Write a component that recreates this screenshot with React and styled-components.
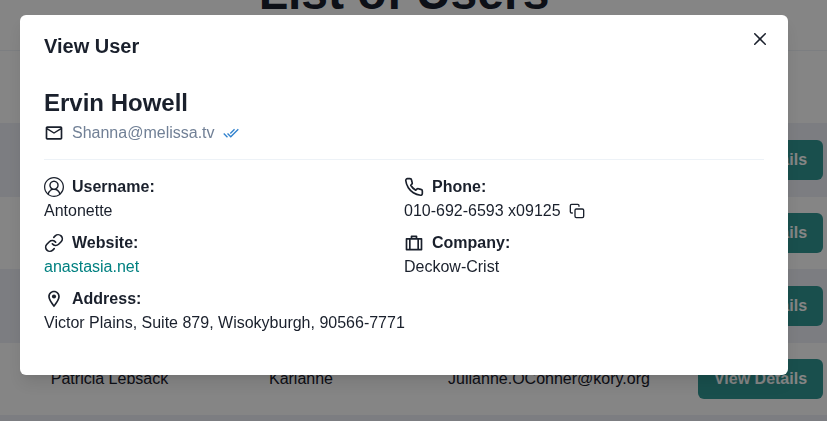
import React from "react";
import styled, { createGlobalStyle } from "styled-components";
import { RiSuitcaseLine } from "react-icons/ri";
import { VscAccount } from "react-icons/vsc";
import { FiLink, FiPhone, FiCopy } from "react-icons/fi";
import { MdDoneAll, MdMailOutline, MdOutlineLocationOn } from "react-icons/md";

const STRIPE = "#edeff7";

const Global = createGlobalStyle`
  *, *::before, *::after { box-sizing: border-box; }
  body {
    margin: 0;
    font-family: "Liberation Sans", Arial, sans-serif;
    font-size: 16px;
    line-height: 1.5;
    color: #1a202c;
    background: #fff;
    overflow: hidden;
  }
  h1, h2, h3, p { margin: 0; }
  svg { display: block; flex-shrink: 0; }
`;

const Page = styled.div`
  height: 421px;
  overflow: hidden;
`;

const PageHeader = styled.header`
  height: 51px;
  width: 808px;
  display: flex;
  justify-content: center;
  align-items: flex-end;
  padding-bottom: 29px;
`;

const PageTitle = styled.h1`
  font-size: 48px;
  line-height: 1.2;
  font-weight: 700;
`;

const Table = styled.div`
  width: 847px;
  border-top: 1px solid #edf2f7;
  margin-top: -1px;
`;

const Row = styled.div`
  display: grid;
  grid-template-columns: 137px 246px 250px 173px;
  align-items: center;
  height: 73px;
  padding: 16px 0 16px 41px;
  border-bottom: 1px solid ${STRIPE};
  background: ${(p) => (p.$striped ? STRIPE : "#fff")};
`;

const Cell = styled.div`
  display: flex;
  justify-content: center;
  white-space: nowrap;
  font-weight: ${(p) => (p.$head ? 700 : 400)};
`;

const DetailsButton = styled.button`
  height: 40px;
  width: 125px;
  padding: 0;
  border: 0;
  border-radius: 6px;
  background: #319795;
  color: #fff;
  font: 600 16px/1.2 "Liberation Sans", Arial, sans-serif;
  white-space: nowrap;
`;

const Overlay = styled.div`
  position: fixed;
  inset: 0;
  background: rgba(0, 0, 0, 0.48);
`;

const DialogLayer = styled.div`
  position: fixed;
  inset: 0;
  padding: 15px 0 0 20px;
  will-change: transform;
`;

const Dialog = styled.section`
  position: relative;
  width: 768px;
  height: 360px;
  border-radius: 6px;
  background: #fff;
  box-shadow: 0 10px 15px -3px rgba(0, 0, 0, 0.1), 0 4px 6px -2px rgba(0, 0, 0, 0.05);
`;

const DialogHeader = styled.header`
  padding: 16px 24px;
  font-size: 20px;
  line-height: 30px;
  font-weight: 600;
`;

const CloseButton = styled.button`
  position: absolute;
  top: 8px;
  right: 12px;
  width: 32px;
  height: 32px;
  padding: 0;
  display: flex;
  align-items: center;
  justify-content: center;
  border: 0;
  border-radius: 6px;
  background: transparent;
  color: #1a202c;
`;

const DialogBody = styled.div`
  padding: 8px 24px;
`;

const Name = styled.h2`
  font-size: 24px;
  line-height: 36px;
  font-weight: 700;
`;

const Line = styled.div`
  display: flex;
  align-items: center;
  gap: 8px;
  height: 24px;
`;

const Email = styled.span`
  color: #718096;
`;

const Divider = styled.hr`
  margin: 14px 0 15px;
  border: 0;
  border-top: 1px solid #edf2f7;
`;

const Fields = styled.div`
  display: grid;
  grid-template-columns: 1fr 1fr;
  row-gap: 8px;
`;

const Field = styled.div`
  grid-column: ${(p) => (p.$wide ? "1 / -1" : "auto")};
`;

const Label = styled.span`
  font-weight: 600;
`;

const SiteLink = styled.a`
  color: #008080;
  text-decoration: none;
`;

const users = [
  ["Leanne Graham", "Bret", "Sincere@april.biz"],
  ["Ervin Howell", "Antonette", "Shanna@melissa.tv"],
  ["Clementine Bauch", "Samantha", "Nathan@yesenia.net"],
  ["Patricia Lebsack", "Karianne", "Julianne.OConner@kory.org"],
];

function CloseIcon() {
  return (
    <svg width="12" height="12" viewBox="0 0 24 24" aria-hidden="true">
      <path
        fill="currentColor"
        d="M.439,21.44a1.5,1.5,0,0,0,2.122,2.121L11.823,14.3a.25.25,0,0,1,.354,0l9.262,9.263a1.5,1.5,0,1,0,2.122-2.121L14.3,12.177a.25.25,0,0,1,0-.354l9.263-9.262A1.5,1.5,0,0,0,21.439.44L12.177,9.7a.25.25,0,0,1-.354,0L2.561.44A1.5,1.5,0,0,0,.439,2.561L9.7,11.823a.25.25,0,0,1,0,.354Z"
      />
    </svg>
  );
}

function InfoField({ icon: Icon, label, wide, children }) {
  return (
    <Field $wide={wide}>
      <Line>
        <Icon size={20} />
        <Label>{label}:</Label>
      </Line>
      <Line>{children}</Line>
    </Field>
  );
}

export default function App() {
  return (
    <>
      <Global />
      <Page>
        <PageHeader>
          <PageTitle>List of Users</PageTitle>
        </PageHeader>
        <Table>
          <Row>
            <Cell $head>Name</Cell>
            <Cell $head>Username</Cell>
            <Cell $head>Email</Cell>
          </Row>
          {users.map(([name, username, email], i) => (
            <Row key={email} $striped={i % 2 === 0}>
              <Cell>{name}</Cell>
              <Cell>{username}</Cell>
              <Cell>{email}</Cell>
              <Cell>
                <DetailsButton>View Details</DetailsButton>
              </Cell>
            </Row>
          ))}
          <Row $striped />
        </Table>
      </Page>
      <Overlay />
      <DialogLayer>
        <Dialog role="dialog" aria-label="View User">
          <DialogHeader>View User</DialogHeader>
          <CloseButton aria-label="Close">
            <CloseIcon />
          </CloseButton>
          <DialogBody>
            <Name>Ervin Howell</Name>
            <Line>
              <MdMailOutline size={20} />
              <Email>Shanna@melissa.tv</Email>
              <MdDoneAll size={16} color="#3182ce" />
            </Line>
            <Divider />
            <Fields>
              <InfoField icon={VscAccount} label="Username">Antonette</InfoField>
              <InfoField icon={FiPhone} label="Phone">
                010-692-6593 x09125
                <FiCopy size={16} />
              </InfoField>
              <InfoField icon={FiLink} label="Website">
                <SiteLink>anastasia.net</SiteLink>
              </InfoField>
              <InfoField icon={RiSuitcaseLine} label="Company">Deckow-Crist</InfoField>
              <InfoField icon={MdOutlineLocationOn} label="Address" wide>
                Victor Plains, Suite 879, Wisokyburgh, 90566-7771
              </InfoField>
            </Fields>
          </DialogBody>
        </Dialog>
      </DialogLayer>
    </>
  );
}
